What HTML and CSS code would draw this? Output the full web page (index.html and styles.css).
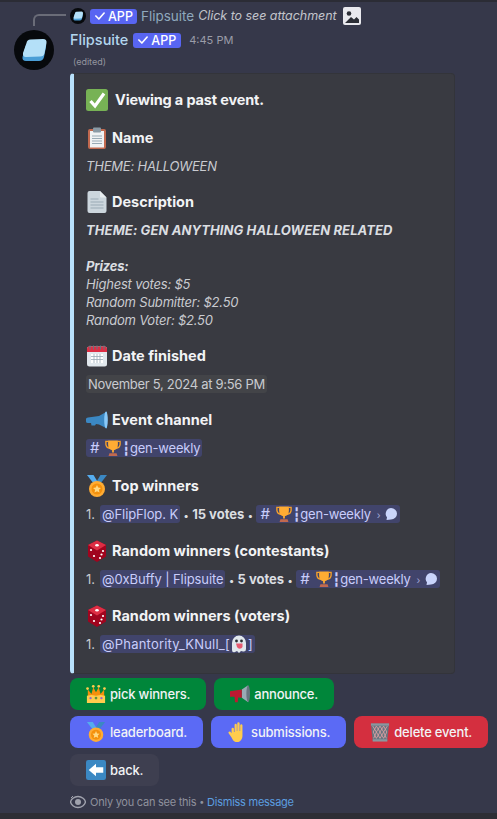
FILE: index.html
```html
<!DOCTYPE html>
<html lang="en">
<head>
<meta charset="utf-8">
<title>Flipsuite</title>
<link rel="stylesheet" href="styles.css">
</head>
<body>
<svg class="defs" aria-hidden="true">
  <defs>
    <symbol id="logo" viewBox="0 0 40 40"><circle cx="20" cy="20" r="20" fill="#07090c"/><path d="M11 16.500 Q11.500 12 15 11.500 L28 10 Q33 10 32 15 L30 25 Q29 29 25 29 L12 29 Q8 29 8.500 25Z" fill="#4a9ed6" transform="translate(0 2)"/><path d="M12.500 13 Q13 9.500 16.500 9.500 L29 9 Q33 9 32.500 13 L30.500 23 Q30 26.500 26 26.500 L12 27 Q8.500 27 9 23Z" fill="#b4e0f8"/></symbol>
    <symbol id="check" viewBox="0 0 16 16"><path d="M2.500 8 6.500 12 13.500 4" fill="none" stroke="#fff" stroke-width="2.200" stroke-linecap="round" stroke-linejoin="round"/></symbol>
    <symbol id="e-check" viewBox="0 0 22 22"><rect width="22" height="22" rx="2.500" fill="#77b255"/><path d="M4.500 12 9 17 18 4.500" fill="none" stroke="#fff" stroke-width="3.200"/></symbol>
    <symbol id="e-clip" viewBox="0 0 22 22"><rect x="2" y="2" width="18" height="20" rx="2" fill="#c1694f"/><rect x="4" y="4" width="14" height="16.500" fill="#f0f2f4"/><rect x="7" y="0.500" width="8" height="5" rx="1" fill="#8a9aa5"/><path d="M6 9h10M6 11.500h10M6 14h10M6 16.500h10" stroke="#99aab5"/></symbol>
    <symbol id="e-page" viewBox="0 0 22 22"><path d="M3.500 0H14L20.500 6.500V20A2 2 0 0 1 18.500 22H3.500A2 2 0 0 1 1.500 20V2A2 2 0 0 1 3.500 0Z" fill="#ccd6dd"/><path d="M14 0L20.500 6.500H15A1 1 0 0 1 14 5.500Z" fill="#e8edf0"/><path d="M4.500 8h8M4.500 11h13M4.500 14h13M4.500 17h13" stroke="#99aab5" stroke-width="1.200"/></symbol>
    <symbol id="e-cal" viewBox="0 0 22 22"><rect x="1" y="1.500" width="20" height="20" rx="2.500" fill="#e1e8ed"/><path d="M1 7V4A2.500 2.500 0 0 1 3.500 1.500H18.500A2.500 2.500 0 0 1 21 4V7Z" fill="#dd2e44"/><path d="M4 0.500v4M7.500 0.500v4M11 0.500v4M14.500 0.500v4M18 0.500v4" stroke="#66757f" stroke-width="1.100"/><path d="M5 9h12v9H5z" fill="#fff"/><path d="M5 11.500h12M5 14.500h12M8 9v9M11 9v9M14 9v9" stroke="#99aab5" stroke-width=".8"/></symbol>
    <symbol id="e-mega" viewBox="0 0 22 22"><path d="M0 10Q0 8.500 2 8.500L13 7 21 2.500V19.500L13 15.500 10 15 9 16.500H5.500L5 14H2Q0 14 0 12.500Z" fill="#3b88c3"/><ellipse cx="20" cy="11" rx="1.800" ry="8.500" fill="#88c9f9"/></symbol>
    <symbol id="e-mega-red" viewBox="0 0 22 22"><path d="M13 6 20 1.500V20L13 15Z" fill="#99aab5"/><ellipse cx="20" cy="10.700" rx="2" ry="9" fill="#66757f"/><path d="M0 8 13 6V15L9 14.800 8.500 20H5.500L5 14H0Z" fill="#be1931"/></symbol>
    <symbol id="e-medal" viewBox="0 0 22 22"><path d="M1 0H7.500L13 9 9.500 11Z" fill="#55acee"/><path d="M21 0H14.500L9 9 12.500 11Z" fill="#3b88c3"/><circle cx="11" cy="14" r="8" fill="#ffac33"/><circle cx="11" cy="14" r="5.500" fill="#f4900c"/><path d="M11 10l1.200 2.600 2.800.3-2.100 1.900.6 2.800-2.500-1.400-2.500 1.400.6-2.800L7 12.900l2.800-.3Z" fill="#ffd983"/></symbol>
    <symbol id="e-die" viewBox="0 0 22 22"><path d="M11 0.500 20 5V16.500L11 22 2 16.500V5Z" fill="#a0041e"/><path d="M11 0.500 20 5 11 10.500 2 5Z" fill="#dd2e44"/><g fill="#fff"><ellipse cx="11" cy="5.200" rx="1.800" ry="1.200"/><circle cx="5" cy="10" r="1.100"/><circle cx="8" cy="16" r="1.100"/><circle cx="14" cy="18" r="1.100"/><circle cx="17" cy="11" r="1.100"/><circle cx="15.500" cy="14.500" r="1.100"/></g></symbol>
    <symbol id="e-trophy" viewBox="0 0 18 18"><path d="M3.500 1.500H1V5Q1.500 9 5.500 9.500M14.500 1.500H17V5Q16.500 9 12.500 9.500" fill="none" stroke="#f9a22a" stroke-width="1.500"/><path d="M3.500 .5H14.500V5Q14.500 10.500 10 11.500V14H8V11.500Q3.500 10.500 3.500 5Z" fill="#ffac33"/><path d="M5 15h8l1 3H4z" fill="#c1694f"/></symbol>
    <symbol id="e-ghost" viewBox="0 0 18 18"><path d="M2 17V8A7 7.500 0 0 1 16 8V14Q16 17 13 16.500L11 16 9 18 7 16 5 17Q2 18 2 15Z" fill="#e1e8ed"/><circle cx="6.500" cy="6" r="1.400" fill="#292f33"/><circle cx="11.500" cy="6" r="1.400" fill="#292f33"/><path d="M6 8.500H12.500V12A3 3 0 0 1 7 12Z" fill="#e75a70"/></symbol>
    <symbol id="e-crown" viewBox="0 0 22 22"><path d="M2 20V6L6 11 8 3.500 11 9 14 3.500 16 11 20 6V20Z" fill="#f4900c"/><path d="M1 13 6 12 11 13 16 12 21 13V21H1Z" fill="#ffcc4d"/><circle cx="1.700" cy="5" r="1.500" fill="#ffcc4d"/><circle cx="20.300" cy="5" r="1.500" fill="#ffcc4d"/><circle cx="8" cy="2.500" r="1.500" fill="#ffcc4d"/><circle cx="14" cy="2.500" r="1.500" fill="#ffcc4d"/><circle cx="5" cy="15.500" r="1.300" fill="#9266cc"/><circle cx="11" cy="15.500" r="1.500" fill="#5c913b"/><circle cx="17" cy="15.500" r="1.300" fill="#9266cc"/></symbol>
    <symbol id="e-basket" viewBox="0 0 22 22"><path d="M1 2H21L19 21H3Z" fill="#66757f"/><path d="M3 4.500 7 11 4 18M7 4.500 3.500 11 7 18 11 11 7 4.500M11 4.500 7 11 11 18 15 11ZM15 4.500 11 11 15 18 18.500 11ZM19 4.500 15 11 18 18" fill="none" stroke="#e0a0a4" stroke-width=".9"/><rect x="1" y="1.500" width="20" height="2.500" fill="#8a979f"/><rect x="3" y="19" width="16" height="2.500" fill="#8a979f"/></symbol>
    <symbol id="e-back" viewBox="0 0 22 22"><rect width="22" height="22" rx="2.500" fill="#3b88c3"/><path d="M3 11 11 4V8H19V14H11V18Z" fill="#fff"/></symbol>
    <symbol id="e-image" viewBox="0 0 18 18"><rect width="18" height="18" rx="2" fill="#e9e9ee"/><circle cx="6" cy="6.500" r="2.300" fill="#2c2e36"/><path d="M2 16 8 10 11 12.500 13.500 10 16 12.500V16Z" fill="#2c2e36"/></symbol>
    <symbol id="bubble" viewBox="0 0 14 14"><path d="M7 1A6 5.700 0 0 1 7 12.400L2.500 13 3 10.300A5.700 5.700 0 0 1 7 1Z" fill="#c9d4fb"/></symbol>
    <symbol id="eye" viewBox="0 0 16 16"><path d="M8 2.500C12 2.500 15 5.500 15.500 8 15 10.500 12 13.500 8 13.500S1 10.500 .5 8C1 5.500 4 2.500 8 2.500Z" fill="none" stroke="#a0a2ad" stroke-width="1.400"/><circle cx="8" cy="8" r="3" fill="#a0a2ad"/><path d="M1 4 3 2" stroke="#a0a2ad"/></symbol>
    <symbol id="e-hand" viewBox="0 0 22 22"><path d="M5 7.500A1.300 1.300 0 0 1 7.600 7.500V11H8.300V3A1.300 1.300 0 0 1 10.800 3V10H11.300V1.600A1.300 1.300 0 0 1 13.900 1.600V10H14.500V3.500A1.300 1.300 0 0 1 17 3.500V15C17 19 14.500 22 11 22 7.500 22 6.500 20 5 17L1.800 12.500C1 11 2.800 9.800 4 11L5 12.300Z" fill="#ffcc4d"/></symbol>
  </defs>
</svg>

<div class="message">
  <div class="reply">
    <span class="reply-line"></span>
    <svg class="reply-avatar"><use href="#logo"/></svg>
    <span class="badge"><svg class="badge-check"><use href="#check"/></svg>APP</span>
    <span class="reply-name">Flipsuite</span>
    <em class="reply-text">Click to see attachment</em>
    <svg class="reply-img"><use href="#e-image"/></svg>
  </div>
  <div class="main">
    <svg class="avatar"><use href="#logo"/></svg>
    <div class="content">
      <div class="head">
        <span class="name">Flipsuite</span>
        <span class="badge"><svg class="badge-check"><use href="#check"/></svg>APP</span>
        <span class="time">4:45 PM</span>
      </div>
      <div class="edited">(edited)</div>
      <div class="embed">
        <div class="title"><svg class="emoji"><use href="#e-check"/></svg>Viewing a past event.</div>

        <section class="section first">
          <h3 class="field"><svg class="emoji"><use href="#e-clip"/></svg>Name</h3>
          <p class="value"><em>THEME: HALLOWEEN</em></p>
        </section>

        <section class="section">
          <h3 class="field"><svg class="emoji"><use href="#e-page"/></svg>Description</h3>
          <p class="value"><em><strong>THEME: GEN ANYTHING HALLOWEEN RELATED</strong></em></p>
          <p class="value spaced"><em><strong>Prizes:</strong><br>Highest votes: $5<br>Random Submitter: $2.50<br>Random Voter: $2.50</em></p>
        </section>

        <section class="section">
          <h3 class="field"><svg class="emoji"><use href="#e-cal"/></svg>Date finished</h3>
          <p class="value"><span class="stamp">November 5, 2024 at 9:56 PM</span></p>
        </section>

        <section class="section">
          <h3 class="field"><svg class="emoji"><use href="#e-mega"/></svg>Event channel</h3>
          <p class="value"><span class="chip channel"><span class="hash">#</span><svg class="mini"><use href="#e-trophy"/></svg><span class="sep">┇</span>gen-weekly</span></p>
        </section>

        <section class="section wide">
          <h3 class="field"><svg class="emoji"><use href="#e-medal"/></svg>Top winners</h3>
          <p class="value"><span class="num">1.</span><span class="chip">@FlipFlop. K</span> <b class="dot">•</b> <strong>15 votes</strong> <b class="dot">•</b> <span class="chip channel"><span class="hash">#</span><svg class="mini"><use href="#e-trophy"/></svg><span class="sep">┇</span>gen-weekly<span class="arrow">›</span><svg class="bubble"><use href="#bubble"/></svg></span></p>
        </section>

        <section class="section">
          <h3 class="field"><svg class="emoji"><use href="#e-die"/></svg>Random winners (contestants)</h3>
          <p class="value"><span class="num">1.</span><span class="chip">@0xBuffy | Flipsuite</span> <b class="dot">•</b> <strong>5 votes</strong> <b class="dot">•</b> <span class="chip channel"><span class="hash">#</span><svg class="mini"><use href="#e-trophy"/></svg><span class="sep">┇</span>gen-weekly<span class="arrow">›</span><svg class="bubble"><use href="#bubble"/></svg></span></p>
        </section>

        <section class="section">
          <h3 class="field"><svg class="emoji"><use href="#e-die"/></svg>Random winners (voters)</h3>
          <p class="value"><span class="num">1.</span><span class="chip long">@Phantority_KNull_[<svg class="mini ghost"><use href="#e-ghost"/></svg>]</span></p>
        </section>
      </div>

      <div class="buttons">
        <div class="btn-row">
          <button class="btn green"><svg class="emoji"><use href="#e-crown"/></svg>pick winners.</button>
          <button class="btn green"><svg class="emoji"><use href="#e-mega-red"/></svg>announce.</button>
        </div>
        <div class="btn-row">
          <button class="btn blue"><svg class="emoji"><use href="#e-medal"/></svg>leaderboard.</button>
          <button class="btn blue"><svg class="emoji"><use href="#e-hand"/></svg>submissions.</button>
          <button class="btn red"><svg class="emoji"><use href="#e-basket"/></svg>delete event.</button>
        </div>
        <div class="btn-row">
          <button class="btn grey"><svg class="emoji"><use href="#e-back"/></svg>back.</button>
        </div>
      </div>

      <div class="notice"><svg class="eye"><use href="#eye"/></svg><span>Only you can see this</span><span class="bullet">•</span><a class="dismiss">Dismiss message</a></div>
    </div>
  </div>
</div>
<div class="strip"></div>
</body>
</html>
```

FILE: styles.css
```css
* {
  box-sizing: border-box;
}

html,
body {
  height: 100%;
}

body {
  display: flex;
  flex-direction: column;
  margin: 0;
  overflow: hidden;
  background: #36384a;
  color: #dbdee1;
  font-family: Inter, "DejaVu Sans", sans-serif;
  font-size: 13px;
  line-height: 18px;
  border-top: 2px solid #2b2c35;
}

.defs {
  display: none;
}

.message {
  flex: 1;
  min-height: 0;
  padding: 4px 0 0 14px;
}

.strip {
  flex: none;
  height: 6px;
  background: #2e2e35;
}

.reply {
  position: relative;
  display: flex;
  align-items: center;
  gap: 4px;
  height: 20px;
  margin-left: 56px;
  font-size: 13.500px;
  white-space: nowrap;
}

.reply-line {
  position: absolute;
  left: -37px;
  top: 8px;
  width: 33px;
  height: 12px;
  border-left: 2px solid #6a6c78;
  border-top: 2px solid #6a6c78;
  border-top-left-radius: 6px;
}

.reply-avatar {
  width: 16px;
  height: 16px;
}

.reply-name {
  color: #8fa9bd;
}

.reply-text {
  color: #c2c4cb;
  font-size: 12.500px;
  letter-spacing: -0.05px;
}

.reply-img {
  width: 18px;
  height: 18px;
  margin-left: 2px;
}

.badge {
  display: inline-flex;
  align-items: center;
  height: 15px;
  padding: 0 4px;
  background: #5865f2;
  border-radius: 3px;
  color: #fff;
  font-size: 12.500px;
  font-weight: 500;
  line-height: 15px;
}

.badge-check {
  width: 12px;
  height: 12px;
  margin-right: 2px;
}

.main {
  display: flex;
  align-items: flex-start;
  gap: 16px;
  margin-top: 4px;
}

.avatar {
  flex: none;
  width: 40px;
  height: 40px;
}

.content {
  width: 413px;
}

.head {
  display: flex;
  align-items: center;
  height: 20px;
}

.name {
  color: #b3d6ee;
  font-size: 14.500px;
  font-weight: 500;
}

.head .badge {
  margin-left: 5px;
  padding: 0 5px 0 4px;
}

.time {
  margin-left: 8px;
  color: #9a9ca8;
  font-size: 11px;
}

.edited {
  margin: 4px 0 0 3px;
  color: #93959f;
  font-size: 9px;
  line-height: 16px;
}

.embed {
  width: 385px;
  margin-top: 3px;
  padding: 14px 0 20px 12px;
  background: #393a41;
  border: 1px solid #33343a;
  border-left: 4px solid #b9e1fb;
  border-radius: 4px;
  color: #c9cbd0;
}

.title {
  display: flex;
  align-items: center;
  height: 24px;
  color: #f2f3f5;
  font-size: 14.500px;
  font-weight: 700;
  letter-spacing: -0.15px;
}

.emoji {
  flex: none;
  width: 22px;
  height: 22px;
  margin-right: 4px;
}

.title .emoji {
  margin-right: 7px;
}

.section {
  margin-top: 15px;
}

.section.first {
  margin-top: 14px;
}

.section.wide {
  margin-top: 16px;
}

.field {
  display: flex;
  align-items: center;
  height: 24px;
  margin: 0 0 7px;
  color: #f2f3f5;
  font-size: 14.500px;
  font-weight: 700;
}

.value {
  margin: 0;
  white-space: nowrap;
}

.value em {
  letter-spacing: -0.2px;
}

.value em strong:only-child {
  letter-spacing: 0.1px;
}

.value.spaced {
  margin-top: 18px;
}

.value strong {
  color: #dbdee1;
  font-weight: 700;
}

.value.spaced strong {
  letter-spacing: -0.2px;
}

.num {
  margin-right: 5px;
}

.stamp {
  padding: 1px 2px;
  background: #434448;
  border-radius: 3px;
  letter-spacing: -0.3px;
}

.chip {
  padding: 1px 2px;
  background: #41446b;
  border-radius: 3px;
  color: #c9cdfb;
  letter-spacing: -0.1px;
}

.chip.long {
  letter-spacing: 0.2px;
}

.channel {
  letter-spacing: -0.2px;
}

.hash {
  margin: 0 6px 0 2px;
  font-size: 15px;
}

.mini {
  width: 16px;
  height: 16px;
  vertical-align: -3px;
}

.ghost {
  width: 18px;
  height: 18px;
  vertical-align: -4px;
}

.sep {
  margin-left: 1px;
  font-family: "DejaVu Sans", sans-serif;
}

.dot {
  color: #dbdee1;
  font-size: 10px;
}

.arrow {
  margin: 0 4px 0 6px;
  font-size: 10px;
  opacity: 0.7;
}

.bubble {
  width: 14px;
  height: 14px;
  vertical-align: -2px;
}

.buttons {
  display: flex;
  flex-direction: column;
  gap: 6px;
  margin-top: 4px;
}

.btn-row {
  display: flex;
  gap: 8px;
}

.btn {
  display: inline-flex;
  align-items: center;
  justify-content: center;
  height: 32px;
  padding: 0 16px;
  border: 0;
  border-radius: 8px;
  color: #f2f3f5;
  font: 500 13px Inter, sans-serif;
  letter-spacing: -0.2px;
  white-space: nowrap;
}

.btn .emoji {
  width: 20px;
  height: 20px;
  margin-right: 4px;
}

.green {
  background: #00863a;
}

.blue {
  background: #5b6af5;
}

.red {
  background: #d42f3f;
}

.grey {
  background: #3e3f50;
}

.notice {
  display: flex;
  align-items: center;
  gap: 3px;
  margin-top: 8px;
  color: #8f919d;
  font-size: 11px;
  line-height: 16px;
  letter-spacing: -0.25px;
  white-space: nowrap;
}

.eye {
  width: 16px;
  height: 16px;
  margin-right: 1px;
}

.bullet {
  font-size: 9px;
}

.dismiss {
  color: #5c9ee0;
}
```
